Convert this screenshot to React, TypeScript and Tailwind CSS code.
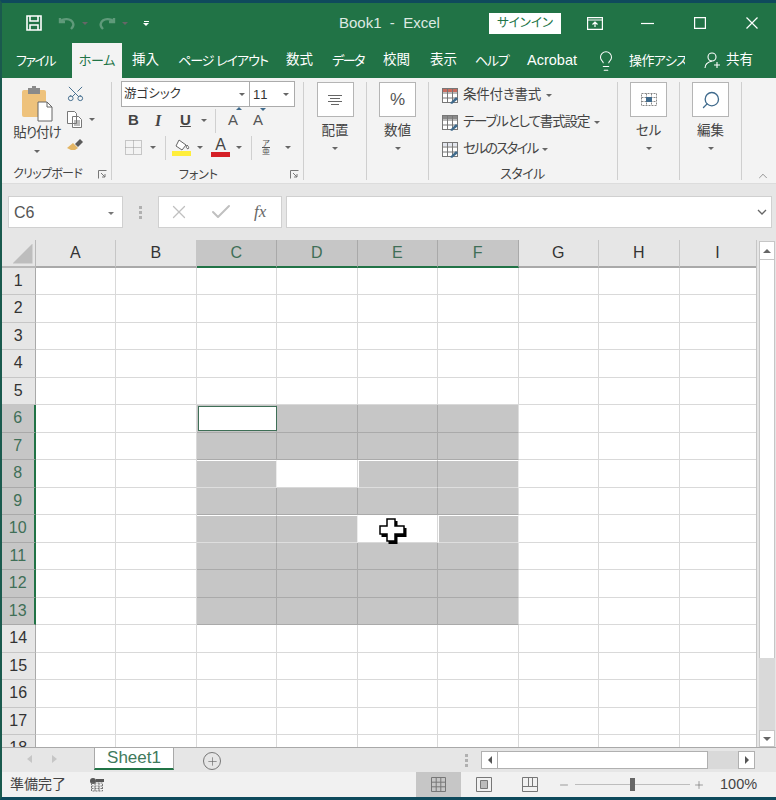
import { Scissors, Search, Lightbulb, X, Check, Plus, Minus, ChevronUp } from 'lucide-react';

const JP = "font-['Liberation_Sans','Noto_Sans_CJK_JP',sans-serif] [font-feature-settings:'palt']";

const Caret = ({ className = '' }: { className?: string }) => (
  <span className={'inline-block w-0 h-0 border-l-[3px] border-r-[3px] border-t-[3px] border-l-transparent border-r-transparent border-t-[#666] ' + className} />
);

const tabs: [string, string][] = [
  ['挿入', 'ml-[10px] w-[27px]'],
  ['ページ レイアウト', 'ml-[19px] w-[89px] tracking-[-1px] text-[13px]'],
  ['数式', 'ml-[19px] w-[27px]'],
  ['データ', 'ml-[19px] w-[32px] tracking-[-1.5px] text-[13px]'],
  ['校閲', 'ml-[19px] w-[27px]'],
  ['表示', 'ml-[20px] w-[27px]'],
  ['ヘルプ', 'ml-[18px] w-[33px] tracking-[-1.3px] text-[13px]'],
  ['Acrobat', 'ml-[18px] w-[52px] text-[14.5px]'],
];

function TitleBar() {
  return (
    <div className="h-[40px] flex items-center text-white relative">
      <svg className="ml-[24px]" width="16" height="16" viewBox="0 0 16 16" fill="none" stroke="#fff" strokeWidth="1.6">
        <path d="M1 1h14v14H1z" />
        <path d="M4 1v5h8V1M4 15v-5h8v5" />
      </svg>
      <svg className="ml-[16px]" width="18" height="14" viewBox="0 0 18 14" fill="none" stroke="#5f9a7a" strokeWidth="2.4">
        <path d="M2 2v4h5M2 6c3-4 11-4 13 1 1 2 0 4-2 6" />
      </svg>
      <Caret className="ml-[6px] border-t-[#5f9a7a]" />
      <svg className="ml-[10px]" width="18" height="14" viewBox="0 0 18 14" fill="none" stroke="#5f9a7a" strokeWidth="2.4">
        <path d="M16 2v4h-5M16 6C13 2 5 2 3 7c-1 2 0 4 2 6" />
      </svg>
      <Caret className="ml-[6px] border-t-[#5f9a7a]" />
      <div className="ml-[15px] flex flex-col items-center gap-[1px]">
        <span className="w-[5px] h-[1px] bg-white" />
        <Caret className="border-t-white" />
      </div>
      <span className="ml-[190px] w-[101px] text-[15px] text-[#dde9e2] whitespace-pre font-['Liberation_Sans',sans-serif]">Book1  -  Excel</span>
      <span className={'ml-[49px] w-[72px] h-[21px] bg-white text-[#217346] text-[12.5px] leading-[21px] text-center ' + JP}>サインイン</span>
      <svg className="ml-[26px]" width="16" height="13" viewBox="0 0 16 13" fill="none" stroke="#fff" strokeWidth="1.2">
        <path d="M.6.6h14.800v11.800H.6zM.6 3h14.800M8 10V5M5.500 7.500 8 5l2.500 2.500" />
      </svg>
      <svg className="ml-[38px]" width="13" height="13" viewBox="0 0 13 13" stroke="#fff" strokeWidth="1.2"><path d="M0 6.500h13" /></svg>
      <svg className="ml-[40px]" width="12" height="12" viewBox="0 0 12 12" fill="none" stroke="#fff" strokeWidth="1.2"><path d="M.6.6h10.800v10.800H.6z" /></svg>
      <svg className="ml-[40px]" width="12" height="12" viewBox="0 0 12 12" fill="none" stroke="#fff" strokeWidth="1.2"><path d="M.5.5l11 11M11.500.5l-11 11" /></svg>
    </div>
  );
}

function TabBar() {
  return (
    <div className={'h-[35px] flex items-center text-[13.5px] text-white whitespace-nowrap ' + JP}>
      <span className="ml-[14px] w-[38px] text-center text-[13px] tracking-[-1.5px]">ファイル</span>
      <span className="ml-[18px] w-[50px] h-[35px] bg-[#f3f3f3] text-[#217346] text-[13px] tracking-[-0.3px] flex items-center justify-center">ホーム</span>
      {tabs.map(([t, c]) => (
        <span key={t} className={'text-center ' + c}>{t}</span>
      ))}
      <Lightbulb className="ml-[17px]" size={22} strokeWidth={1.1} />
      <span className="ml-[12px] w-[56px] overflow-hidden text-[13px] tracking-[-0.6px]">操作アシスト</span>
      <svg className="ml-[19px]" width="17" height="17" viewBox="0 0 17 17" fill="none" stroke="#fff" strokeWidth="1.1">
        <circle cx="8" cy="5" r="4" />
        <path d="M1 16c0-4 3-6 7-7M10 13h6M13 10v6" />
      </svg>
      <span className="ml-[5px]">共有</span>
    </div>
  );
}

function Sep() {
  return <div className="w-[1px] h-[98px] bg-[#cfcfcf] shrink-0" />;
}

function Launcher() {
  return (
    <svg width="9" height="9" viewBox="0 0 9 9" fill="none" stroke="#777" strokeWidth="1">
      <path d="M.5 8.500v-8h8M3 3l4 4M7 4v3H4" />
    </svg>
  );
}

function BigButton({ label, w, children }: { label: string; w: string; children: React.ReactNode }) {
  return (
    <div className={'flex flex-col items-center shrink-0 ' + w}>
      <div className="w-[37px] h-[35px] bg-white border border-[#b5b5b5] flex items-center justify-center shrink-0">{children}</div>
      <span className="mt-[4px] text-[13.5px] leading-[20px] text-[#444]">{label}</span>
      <Caret className="mt-[6px]" />
    </div>
  );
}

function Clipboard() {
  return (
    <div className="w-[109px] shrink-0 flex flex-col">
      <div className="flex h-[83px] shrink-0">
        <div className="ml-[6px] w-[58px] flex flex-col items-center">
          <svg className="mt-[4px]" width="32" height="36" viewBox="0 0 32 36">
            <rect x="1" y="4" width="24" height="27" rx="2" fill="#eec27c" />
            <rect x="7" y="2" width="12" height="6" fill="#8a8a8a" />
            <rect x="11" y="0" width="4" height="3" fill="#8a8a8a" />
            <path d="M17 16h9l5 5v14H17z" fill="#fff" stroke="#666" />
            <path d="M26 16v5h5" fill="none" stroke="#666" />
          </svg>
          <span className="mt-[2px] text-[13.5px] leading-[18px] text-[#444] tracking-[-1px] whitespace-nowrap">貼り付け</span>
          <Caret className="mt-[8px]" />
        </div>
        <div className="ml-[1px] flex flex-col items-start pt-[2px]">
          <Scissors className="-rotate-90 -ml-[1px]" size={19} strokeWidth={1.2} color="#3f6a8c" />
          <div className="mt-[8px] flex items-center">
            <svg width="16" height="17" viewBox="0 0 16 17" fill="#fff" stroke="#777">
              <path d="M.5.5h7l2 2v10h-9zM5.500 5.500h6l3 3v8h-9z" />
              <path d="M7 10h6M7 12h6M7 14h6" />
            </svg>
            <Caret className="ml-[6px]" />
          </div>
          <svg className="mt-[11px]" width="17" height="14" viewBox="0 0 17 14">
            <path d="M0 9 6 4l5 5-3 2-4 0z" fill="#e4b665" />
            <path d="M8 5l5-5 3 3-5 5z" fill="#5b5b5b" />
          </svg>
        </div>
      </div>
      <div className="flex items-center h-[18px] shrink-0 pl-[11px] text-[12px] text-[#444] tracking-[-0.7px] whitespace-nowrap">
        <span className="w-[68px]">クリップボード</span>
        <span className="ml-[17px]"><Launcher /></span>
      </div>
    </div>
  );
}

function FontGroup() {
  return (
    <div className="w-[191px] shrink-0 flex flex-col pl-[9px]">
      <div className="-mt-[1px] flex h-[26px] shrink-0">
        <div className="w-[129px] border border-[#ababab] bg-white flex items-center px-[2px] pt-[1px] text-[12.5px] text-[#333]">
          <span className="flex-1">游ゴシック</span>
          <Caret className="mr-[2px]" />
        </div>
        <div className="w-[45px] border border-l-0 border-[#ababab] bg-white flex items-center pl-[3px] pr-[5px] pt-[1px] text-[13px] text-[#333]">
          <span className="flex-1 tracking-[1px]">11</span>
          <Caret />
        </div>
      </div>
      <div className="mt-[1px] h-[25px] shrink-0 flex items-center text-[15px] text-[#444] font-['Liberation_Sans',sans-serif]">
        <span className="ml-[7px] w-[14px] font-bold">B</span>
        <span className="ml-[13px] w-[14px] italic font-bold font-['Liberation_Serif',serif] text-[16px]">I</span>
        <span className="ml-[11px] w-[14px] font-bold underline">U</span>
        <Caret className="ml-[7px]" />
        <div className="ml-[8px] w-[1px] h-[24px] bg-[#d0d0d0]" />
        <span className="ml-[12px] relative text-[#555]">A<span className="absolute -top-[2px] left-[8px] border-l-[3px] border-r-[3px] border-b-[3px] border-l-transparent border-r-transparent border-b-[#3f6a8c]" /></span>
        <span className="ml-[15px] relative text-[#555]">A<span className="absolute -top-[1px] left-[7px] border-l-[3px] border-r-[3px] border-t-[3px] border-l-transparent border-r-transparent border-t-[#3f6a8c]" /></span>
      </div>
      <div className="mt-[1px] h-[27px] shrink-0 flex items-center">
        <svg className="ml-[4px]" width="17" height="15" viewBox="0 0 17 15" fill="none" stroke="#999" strokeDasharray="1 1">
          <path d="M.5.500h16v14H.5zM8.500.5v14M.5 7.500h16" />
        </svg>
        <Caret className="ml-[8px]" />
        <div className="ml-[9px] w-[1px] h-[24px] bg-[#d0d0d0]" />
        <div className="ml-[6px] flex flex-col items-center w-[19px]">
          <svg width="16" height="12" viewBox="0 0 16 12" fill="#fff" stroke="#666">
            <path d="M5 1l7 5-4 5-6-4zM13 6c2 2 2 3 1 4-2-1-2-2-1-4z" />
          </svg>
          <span className="w-[19px] h-[5px] bg-[#ffee3b]" />
        </div>
        <Caret className="ml-[6px]" />
        <div className="ml-[8px] flex flex-col items-center w-[19px]">
          <span className="text-[16px] leading-[14px] text-[#444] font-['Liberation_Sans',sans-serif]">A</span>
          <span className="w-[19px] h-[5px] bg-[#d51f26]" />
        </div>
        <Caret className="ml-[6px]" />
        <div className="ml-[9px] w-[1px] h-[24px] bg-[#d0d0d0]" />
        <div className="ml-[8px] w-[12px] flex flex-col items-center text-[8px] leading-[7px] text-[#555]">
          <span>ア</span>
          <span className="w-[8px] h-[1px] bg-[#555]" />
          <span>亜</span>
        </div>
        <Caret className="ml-[13px]" />
      </div>
      <div className="h-[19px] mt-[4px] shrink-0 flex items-center text-[12px] text-[#444]">
        <span className="ml-[55px] w-[45px] text-center">フォント</span>
        <span className="ml-[69px]"><Launcher /></span>
      </div>
    </div>
  );
}

const styleItems = [
  { t: '条件付き書式', fill: '#c86b5e', tr: 'tracking-[-0.2px]' },
  { t: 'テーブルとして書式設定', fill: '#8a8a8a', tr: 'tracking-[-1.1px]' },
  { t: 'セルのスタイル', fill: '#e3e6ee', tr: 'tracking-[-1.8px]' },
];

function StylesGroup() {
  return (
    <div className="w-[188px] shrink-0 flex flex-col pl-[13px]">
      <div className="h-[82px] shrink-0 pt-[4px] flex flex-col gap-[8px] text-[13.5px] text-[#444]">
        {styleItems.map((s) => (
          <div key={s.t} className="h-[19px] flex items-center whitespace-nowrap">
            <svg width="17" height="16" viewBox="0 0 17 16" fill="none" stroke="#777">
              <rect x=".5" y=".5" width="15" height="14" fill="#fff" />
              <rect x="1" y="1" width="14" height="3" fill={s.fill} stroke="none" />
              <path d="M5.500.5v14M10.500.5v14M.5 5h15M.5 10h15" />
              <path d="M8 15l6-6 2 2-6 5z" fill="#3f6a8c" stroke="none" />
            </svg>
            <span className={'ml-[4px] ' + s.tr}>{s.t}</span>
            <Caret className="ml-[5px]" />
          </div>
        ))}
      </div>
      <div className="h-[19px] shrink-0 flex items-center justify-center text-[13px] text-[#444] pr-[14px] tracking-[-0.5px]">スタイル</div>
    </div>
  );
}

function Ribbon() {
  return (
    <div className={'h-[106px] bg-[#f3f3f3] border-b border-[#dcdcdc] flex pt-[4px] relative ' + JP}>
      <Clipboard />
      <Sep />
      <FontGroup />
      <Sep />
      <BigButton label="配置" w="w-[62px]">
        <svg width="16" height="10" viewBox="0 0 16 10" stroke="#666"><path d="M1 .5h14M3 3.500h10M1 6.500h14M4 9.500h8" /></svg>
      </BigButton>
      <Sep />
      <BigButton label="数値" w="w-[61px]">
        <span className="text-[17px] text-[#555] font-['Liberation_Sans',sans-serif]">%</span>
      </BigButton>
      <Sep />
      <StylesGroup />
      <Sep />
      <BigButton label="セル" w="w-[61px]">
        <svg width="18" height="19" viewBox="0 0 18 19" fill="none" stroke="#888" strokeDasharray="2 1">
          <path d="M1.500 3.500h15v12h-15zM1.500 7.500h15M1.500 11.500h15M6.500 3.500v12M11.500 3.500v12" />
          <rect x="6" y="7" width="6" height="5" fill="#3f6a8c" stroke="none" />
        </svg>
      </BigButton>
      <Sep />
      <BigButton label="編集" w="w-[61px]">
        <Search className="-scale-x-100" size={20} strokeWidth={1.6} color="#3f6a8c" />
      </BigButton>
      <Sep />
      <ChevronUp className="absolute right-[6px] bottom-0" size={14} strokeWidth={1} color="#555" />
    </div>
  );
}

function FormulaBar() {
  return (
    <div className="h-[56px] bg-[#e6e6e6] flex pt-[12px] pl-[6px] pr-[4px]">
      <div className="w-[115px] h-[32px] bg-white border border-[#d0d0d0] flex items-center pl-[5px] pr-[8px] pt-[2px] text-[16px] text-[#555] font-['Liberation_Sans',sans-serif]">
        <span className="flex-1">C6</span>
        <Caret className="border-t-[#777]" />
      </div>
      <div className="ml-[16px] w-[3px] h-[32px] flex flex-col justify-center gap-[2px]">
        <span className="h-[3px] bg-[#b0b0b0]" />
        <span className="h-[3px] bg-[#b0b0b0]" />
        <span className="h-[3px] bg-[#b0b0b0]" />
      </div>
      <div className="ml-[16px] w-[124px] h-[32px] bg-white border border-[#d0d0d0] flex items-center">
        <X className="ml-[9px]" size={22} strokeWidth={1.4} color="#c0c0c0" />
        <Check className="ml-[19px]" size={24} strokeWidth={2} color="#c0c0c0" />
        <span className="ml-[21px] text-[17px] italic text-[#666] font-['Liberation_Serif',serif]">fx</span>
      </div>
      <div className="ml-[4px] flex-1 h-[32px] bg-white border border-[#d0d0d0] flex items-center justify-end pr-[4px]">
        <svg width="10" height="6" viewBox="0 0 10 6" fill="none" stroke="#666" strokeWidth="1.3"><path d="M1 1l4 4 4-4" /></svg>
      </div>
    </div>
  );
}

const cols = ['A', 'B', 'C', 'D', 'E', 'F', 'G', 'H', 'I'];
const rows = Array.from({ length: 18 }, (_, i) => i + 1);

function isSelected(r: number, c: string) {
  if (r < 6 || r > 13) return false;
  if (!'CDEF'.includes(c)) return false;
  if (r === 8 && c === 'D') return false;
  if (r === 10 && c === 'E') return false;
  return true;
}

function cellClass(r: number, c: string) {
  if (!isSelected(r, c)) return 'bg-white border-r border-b border-[#d9d9d9]';
  // the deselected cells leave light edges on what surrounds them
  if (r === 8 || r === 10) {
    const rightLight = (r === 8 && c === 'C') || (r === 10 && c === 'D') || c === 'F';
    const leftLight = (r === 8 && c === 'E') || (r === 10 && c === 'F');
    return (
      'bg-[#c6c6c6] border-b border-b-[#dedede] border-t border-t-white ' +
      (rightLight ? 'border-r border-r-[#ececec] ' : 'border-r border-r-[#aaaaaa] ') +
      (leftLight ? 'border-l border-l-white' : '')
    );
  }
  return (
    'bg-[#c6c6c6] border-b border-b-[#aaaaaa] ' +
    (c === 'F' ? 'border-r border-r-[#dedede]' : 'border-r border-r-[#aaaaaa]')
  );
}

function Sheet() {
  return (
    <div className="flex-1 min-w-0 h-[507px] overflow-hidden relative font-['Liberation_Sans',sans-serif] bg-white">
      <div className="grid grid-cols-[33.5px_repeat(8,80.5px)_77px] grid-rows-[27.5px_repeat(18,27.5px)]">
        <div className="bg-[#e6e6e6] border-r border-b-2 border-[#b8b8b8] flex items-end justify-end p-[2px]">
          <span className="w-[20px] h-[20px] bg-[#bdbdbd] [clip-path:polygon(100%_0,100%_100%,0_100%)]" />
        </div>
        {cols.map((c) => {
          const on = 'CDEF'.includes(c);
          return (
            <div
              key={c}
              className={
                on
                  ? 'bg-[#c6c6c6] border-r border-[#a9a9a9] border-b-2 border-b-[#217346] text-[#3f6f57] flex items-center justify-center text-[16px]'
                  : 'bg-[#e6e6e6] border-r border-[#c6c6c6] border-b-2 border-b-[#a9a9a9] text-[#333] flex items-center justify-center text-[16px]'
              }
            >
              {c}
            </div>
          );
        })}
        {rows.map((r) => {
          const on = r >= 6 && r <= 13;
          return [
            <div
              key={'h' + r}
              className={
                on
                  ? 'bg-[#c6c6c6] border-r-2 border-r-[#217346] border-b border-b-[#a9a9a9] text-[#3f6f57] flex items-center justify-center text-[16px]'
                  : 'bg-[#e6e6e6] border-r border-r-[#a9a9a9] border-b border-b-[#c6c6c6] text-[#333] flex items-center justify-center text-[16px]'
              }
            >
              {r}
            </div>,
            ...cols.map((c) => <div key={c + r} className={cellClass(r, c)} />),
          ];
        })}
      </div>
      {/* active cell and the mouse pointer lie over the grid */}
      <div className="absolute left-[195.5px] top-[166px] w-[79px] h-[25px] bg-white border border-[#3f6f57]" />
      <svg className="absolute left-[376px] top-[277px]" width="30" height="28" viewBox="0 0 30 28">
        <path d="M9 3h9v7h9v9h-9v7H9v-7H2v-9h7z" fill="#000" transform="translate(1.5 1)" />
        <path d="M9 2h8v7h9v8h-9v7H9v-7H2V9h7z" fill="#fff" stroke="#000" strokeWidth="1.5" />
      </svg>
    </div>
  );
}

function VScroll() {
  return (
    <div className="w-[20px] h-[507px] bg-[#e6e6e6] border-l border-[#c6c6c6] pl-[2px] pr-[1px] flex flex-col shrink-0">
      <div className="h-[19px] mt-[1px] bg-white border border-[#c6c6c6] flex items-center justify-center">
        <span className="border-l-[4px] border-r-[4px] border-b-[4px] border-l-transparent border-r-transparent border-b-[#666]" />
      </div>
      <div className="h-[398px] bg-white border-x border-[#c6c6c6]" />
      <div className="flex-1 bg-[#d9d9d9]" />
      <div className="h-[17px] bg-white border border-[#c6c6c6] flex items-center justify-center">
        <span className="border-l-[4px] border-r-[4px] border-t-[4px] border-l-transparent border-r-transparent border-t-[#666]" />
      </div>
    </div>
  );
}

function TabStrip() {
  return (
    <div className="h-[25px] bg-[#e6e6e6] border-t border-[#a9a9a9] flex items-start font-['Liberation_Sans',sans-serif]">
      <div className="ml-[25px] mt-[7px] flex gap-[20px]">
        <span className="border-y-[4px] border-r-[5px] border-y-transparent border-r-[#c6c6c6]" />
        <span className="border-y-[4px] border-l-[5px] border-y-transparent border-l-[#c6c6c6]" />
      </div>
      <div className="ml-[37px] w-[80px] h-[22px] bg-white border-x border-b-2 border-x-[#a9a9a9] border-b-[#217346] text-[17px] leading-[20px] text-[#3f7a5c] text-center">Sheet1</div>
      <div className="ml-[29px] mt-[4px] w-[18px] h-[18px] rounded-full border border-[#777] flex items-center justify-center">
        <Plus size={13} strokeWidth={1.2} color="#666" />
      </div>
      <div className="ml-[244px] mt-[6px] w-[3px] flex flex-col gap-[2px]">
        <span className="h-[3px] bg-[#b0b0b0]" />
        <span className="h-[3px] bg-[#b0b0b0]" />
        <span className="h-[3px] bg-[#b0b0b0]" />
      </div>
      <div className="ml-[13px] mt-[3px] w-[274px] h-[18px] flex bg-[#d9d9d9]">
        <div className="w-[17px] bg-white border border-[#b0b0b0] flex items-center justify-center">
          <span className="border-y-[4px] border-r-[4px] border-y-transparent border-r-[#555]" />
        </div>
        <div className="w-[210px] bg-white border-y border-r border-[#b0b0b0]" />
        <div className="flex-1" />
        <div className="w-[17px] bg-white border border-[#b0b0b0] flex items-center justify-center">
          <span className="border-y-[4px] border-l-[4px] border-y-transparent border-l-[#555]" />
        </div>
      </div>
    </div>
  );
}

function StatusBar() {
  return (
    <div className={'h-[25px] bg-[#f1f1f1] flex items-center text-[14px] text-[#444] ' + JP}>
      <span className="ml-[8px] w-[56px]">準備完了</span>
      <svg className="ml-[24px]" width="14" height="14" viewBox="0 0 14 14">
        <circle cx="3" cy="3" r="3" fill="#555" />
        <path d="M1.500 5h11v8h-11zM1.500 8h11M1.500 10.500h11M5 5v8M9 5v8" fill="none" stroke="#777" strokeDasharray="2 1" />
        <rect x="6" y="1" width="8" height="3" fill="#555" />
      </svg>
      <div className="ml-[312px] w-[45px] h-[25px] bg-[#c6c6c6] flex items-center justify-center">
        <svg width="15" height="15" viewBox="0 0 15 15" fill="none" stroke="#777">
          <path d="M.5.5h14v14H.5zM5.200.5v14M9.800.5v14M.5 5.200h14M.5 9.800h14" />
        </svg>
      </div>
      <svg className="ml-[15px]" width="16" height="15" viewBox="0 0 16 15" fill="none" stroke="#777">
        <path d="M.5.500h15v14H.5z" />
        <path d="M4.500 3.500h7v8h-7z" fill="#bbb" />
      </svg>
      <svg className="ml-[30px]" width="16" height="15" viewBox="0 0 16 15" fill="none" stroke="#777">
        <path d="M.5.500h15v14H.5zM.5 9.500h15M6.500.5v9M10.500.5v9" />
      </svg>
      <Minus className="ml-[20px]" size={12} strokeWidth={1.4} color="#777" />
      <div className="ml-[5px] w-[115px] h-[1px] bg-[#bdbdbd] relative">
        <span className="absolute left-[55px] -top-[6px] w-[5px] h-[13px] bg-[#666]" />
      </div>
      <Plus className="ml-[3px]" size={12} strokeWidth={1.2} color="#666" />
      <span className="ml-[15px] font-['Liberation_Sans',sans-serif] text-[14.5px]">100%</span>
    </div>
  );
}

export default function App() {
  return (
    <div className="w-[776px] h-[800px] overflow-hidden flex flex-col bg-[#217346] border-t-[3px] border-b-[3px] border-l-2 border-t-[#0f4a5c] border-b-[#0f4a5c] border-l-[#1a5a4e]">
      <TitleBar />
      <TabBar />
      <Ribbon />
      <FormulaBar />
      <div className="flex bg-white">
        <Sheet />
        <VScroll />
      </div>
      <TabStrip />
      <StatusBar />
    </div>
  );
}
